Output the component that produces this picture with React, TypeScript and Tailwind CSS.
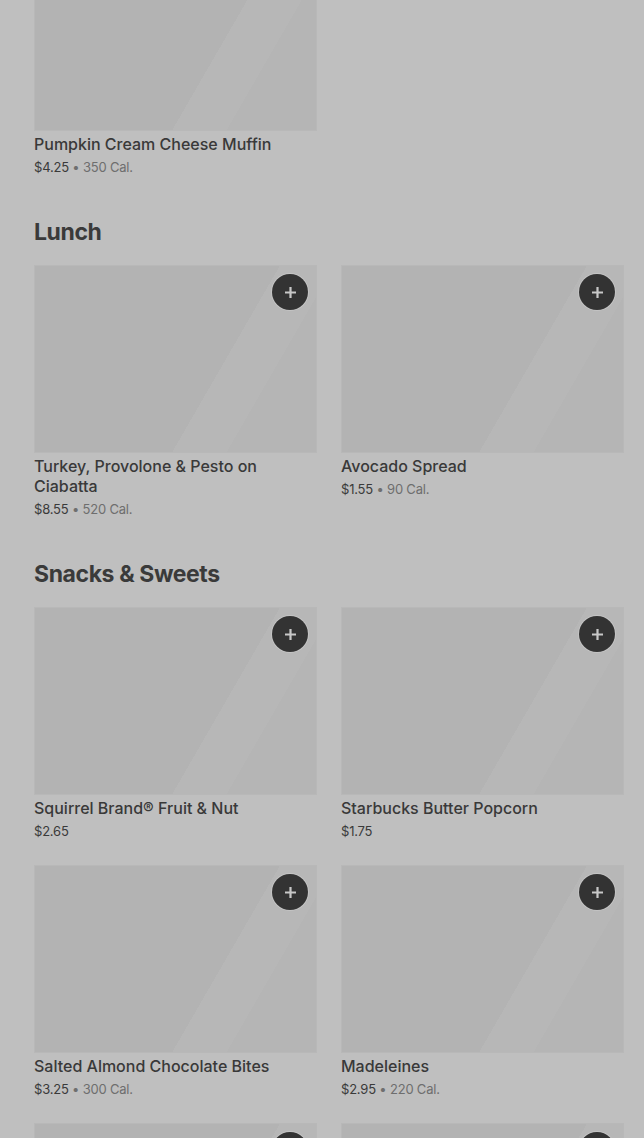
type Item = { name: string; price: string; cal?: string; add?: boolean };

const lunch: Item[] = [
  { name: "Turkey, Provolone & Pesto on Ciabatta", price: "$8.55", cal: "520 Cal.", add: true },
  { name: "Avocado Spread", price: "$1.55", cal: "90 Cal.", add: true },
];

const snacks: Item[] = [
  { name: "Squirrel Brand® Fruit & Nut", price: "$2.65", add: true },
  { name: "Starbucks Butter Popcorn", price: "$1.75", add: true },
  { name: "Salted Almond Chocolate Bites", price: "$3.25", cal: "300 Cal.", add: true },
  { name: "Madeleines", price: "$2.95", cal: "220 Cal.", add: true },
  { name: "", price: "", add: true },
  { name: "", price: "", add: true },
];

function PlusButton() {
  return (
    <button className="absolute top-2 right-2 w-9 h-9 rounded-full bg-[#333333] shadow-[0_0_0_1px_rgba(205,205,205,0.6)] flex items-center justify-center">
      <svg width="13" height="13" viewBox="0 0 13 13" fill="none">
        <path d="M6.5 1v11M1 6.5h11" stroke="#c8c8c8" strokeWidth="2.2" />
      </svg>
    </button>
  );
}

function Card({ item }: { item: Item }) {
  return (
    <div className="flex flex-col">
      <div className="relative h-[188px] border border-[#b8b8b8] bg-[linear-gradient(120deg,#b3b3b3_63%,#b7b7b7_63%,#b7b7b7_77%,#b5b5b5_77%)]">
        {item.add && <PlusButton />}
      </div>
      {item.name && (
        <>
          <div className="mt-[3px] text-[16px] leading-5 font-medium text-[#393939]">{item.name}</div>
          <div className="mt-[3px] text-[13px] leading-5 tracking-[-0.2px] text-[#3a3a3a]">
            {item.price}
            {item.cal && <span className="text-[#6e6e6e]"> • {item.cal}</span>}
          </div>
        </>
      )}
    </div>
  );
}

function Section({ title, items }: { title: string; items: Item[] }) {
  return (
    <section className="pt-[39px]">
      <h2 className="text-[23px] leading-8 font-bold tracking-[-0.4px] text-[#3a3a3a]">{title}</h2>
      <div className="mt-[17px] grid grid-cols-2 gap-x-6 gap-y-6">
        {items.map((it, i) => (
          <Card key={i} item={it} />
        ))}
      </div>
    </section>
  );
}

export default function App() {
  return (
    <div
      className="h-[1138px] overflow-hidden bg-[#bfbfbf] pl-[34px] pr-5"
      style={{ fontFamily: "Inter, 'Noto Sans', sans-serif" }}
    >
      <div className="-mt-[57px] grid grid-cols-2 gap-x-6">
        <Card item={{ name: "Pumpkin Cream Cheese Muffin", price: "$4.25", cal: "350 Cal." }} />
      </div>
      <Section title="Lunch" items={lunch} />
      <Section title="Snacks & Sweets" items={snacks} />
    </div>
  );
}
